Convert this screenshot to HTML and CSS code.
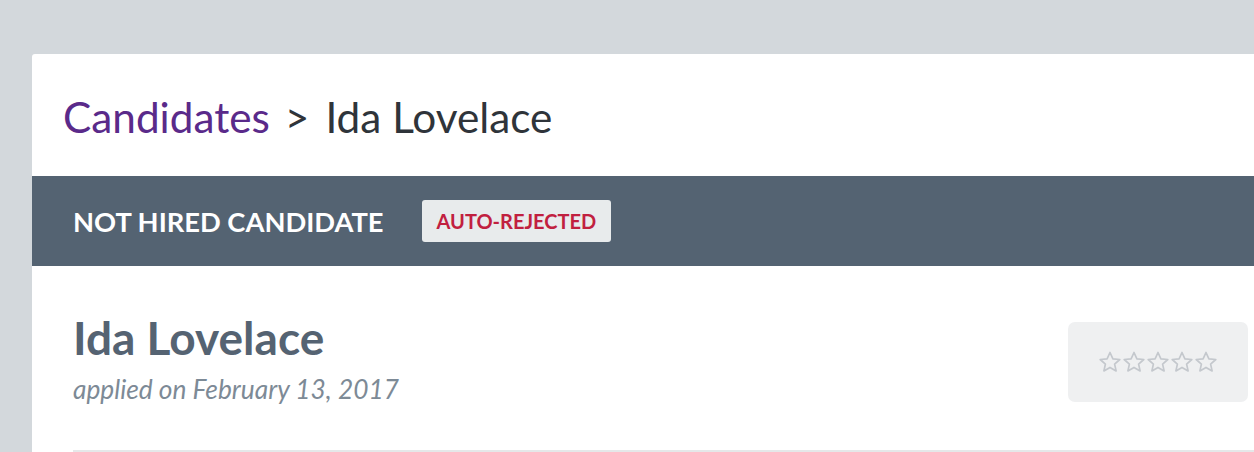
FILE: index.html
```html
<!DOCTYPE html>
<html lang="en">
<head>
  <meta charset="UTF-8">
  <meta name="viewport" content="width=device-width, initial-scale=1.0">
  <title>Ida Lovelace - Candidates</title>
  <link rel="stylesheet" href="styles.css">
</head>
<body>

<div class="page">
  <div class="card">
    <div class="breadcrumb">
      <a class="crumb-link" href="#">Candidates</a><span class="crumb-sep">&gt;</span><span class="crumb-current">Ida Lovelace</span>
    </div>

    <div class="status-bar">
      <span class="status-title">NOT HIRED CANDIDATE</span>
      <span class="status-badge">AUTO-REJECTED</span>
    </div>

    <div class="candidate">
      <div class="candidate-info">
        <h1 class="candidate-name">Ida Lovelace</h1>
        <div class="candidate-date">applied on February 13, 2017</div>
      </div>
      <div class="rating">
        <svg class="star" viewBox="0 0 24 24"><path d="M12 2.5l2.9 6.3 6.9.7-5.2 4.6 1.5 6.8L12 17.4l-6.1 3.5 1.5-6.8-5.2-4.6 6.9-.7z"/></svg>
        <svg class="star" viewBox="0 0 24 24"><path d="M12 2.5l2.9 6.3 6.9.7-5.2 4.6 1.5 6.8L12 17.4l-6.1 3.5 1.5-6.8-5.2-4.6 6.9-.7z"/></svg>
        <svg class="star" viewBox="0 0 24 24"><path d="M12 2.5l2.9 6.3 6.9.7-5.2 4.6 1.5 6.8L12 17.4l-6.1 3.5 1.5-6.8-5.2-4.6 6.9-.7z"/></svg>
        <svg class="star" viewBox="0 0 24 24"><path d="M12 2.5l2.9 6.3 6.9.7-5.2 4.6 1.5 6.8L12 17.4l-6.1 3.5 1.5-6.8-5.2-4.6 6.9-.7z"/></svg>
        <svg class="star" viewBox="0 0 24 24"><path d="M12 2.5l2.9 6.3 6.9.7-5.2 4.6 1.5 6.8L12 17.4l-6.1 3.5 1.5-6.8-5.2-4.6 6.9-.7z"/></svg>
      </div>
    </div>

    <div class="divider"></div>
  </div>
</div>

</body>
</html>
```

FILE: styles.css
```css
html, body {
  margin: 0;
  padding: 0;
  overflow: hidden;
  height: 100%;
  font-family: Lato, "Open Sans", sans-serif;
  background-color: #d3d8dc;
}

.page {
  padding: 54px 0 0 32px;
}

.card {
  width: 1256px;
  min-height: 500px;
  background-color: #fff;
  border-top-left-radius: 3px;
}

.breadcrumb {
  height: 122px;
  box-sizing: border-box;
  padding: 37px 0 0 31px;
  font-size: 42.3px;
  color: #2f343a;
}

.crumb-link {
  color: #5a2a8a;
  text-decoration: none;
}

.crumb-sep {
  margin: 0 16px 0 15px;
}

.status-bar {
  display: flex;
  align-items: center;
  height: 90px;
  padding-left: 41px;
  background-color: #546372;
}

.status-title {
  color: #fff;
  font-size: 27.3px;
  font-weight: bold;
}

.status-badge {
  margin-left: 38px;
  padding: 9px 15px 9px;
  background-color: #e8ebec;
  border-radius: 3px;
  color: #c1203f;
  font-size: 20px;
  font-weight: bold;
}

.candidate {
  display: flex;
  justify-content: space-between;
  padding: 44px 40px 0 41px;
}

.candidate-name {
  margin: 0;
  font-size: 46px;
  font-weight: bold;
  color: #556372;
  line-height: 56px;
}

.candidate-date {
  margin-top: 7px;
  font-size: 26.3px;
  font-style: italic;
  color: #7d8a96;
}

.rating {
  display: flex;
  align-items: center;
  justify-content: center;
  width: 180px;
  height: 80px;
  margin-top: 12px;
  background-color: #eff0f1;
  border-radius: 7px;
}

.star {
  width: 24px;
  height: 24px;
  fill: none;
  stroke: #c4c8cd;
  stroke-width: 1.7;
  stroke-linejoin: round;
}

.divider {
  height: 2px;
  margin: 45px 0 0 41px;
  background-color: #e5e8e9;
}
```
